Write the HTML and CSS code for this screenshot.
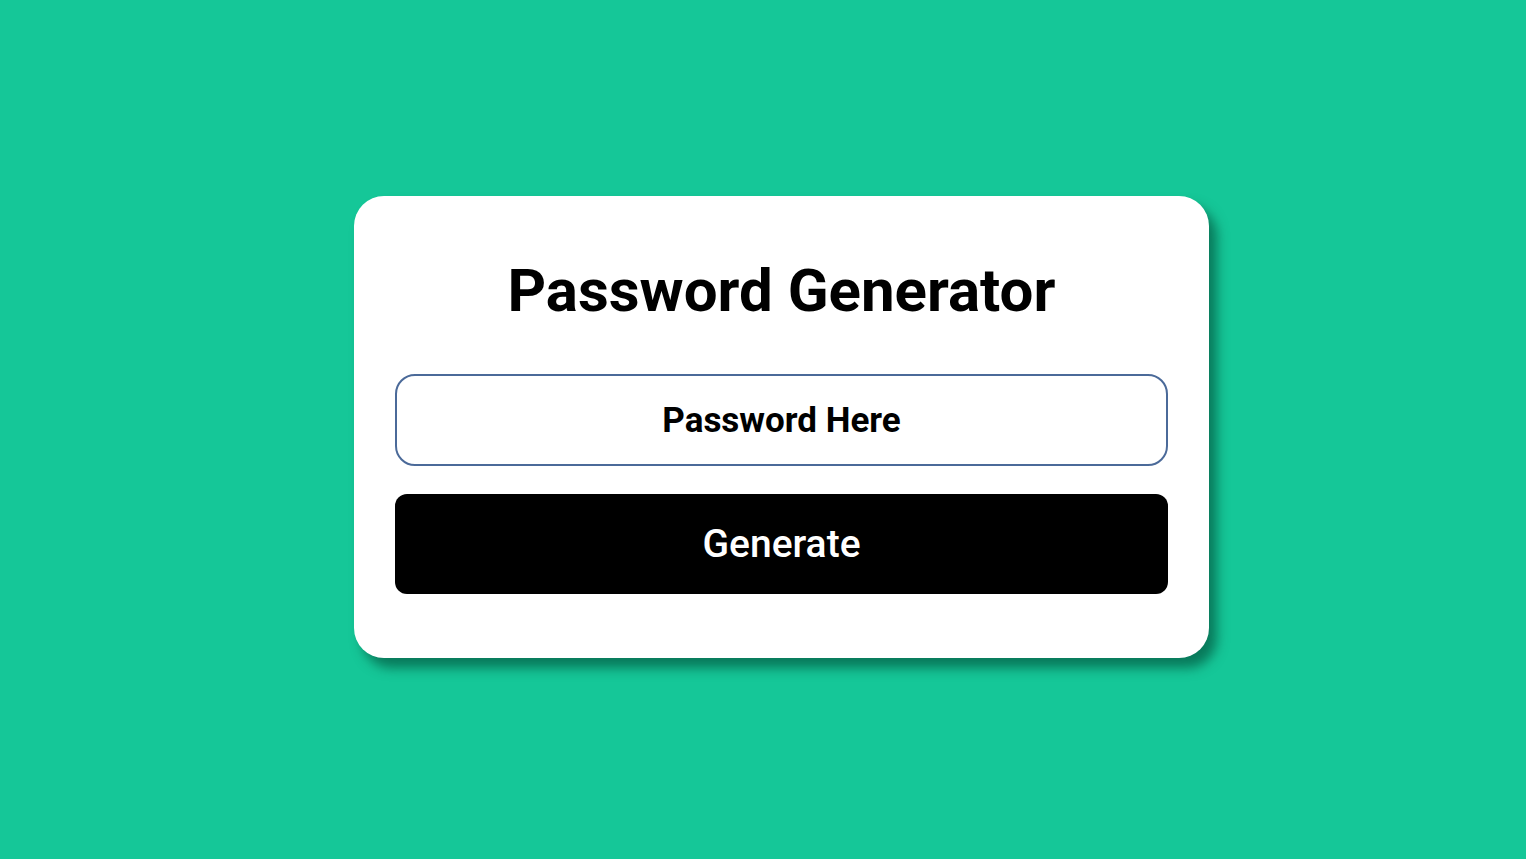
FILE: index.html
```html
<!DOCTYPE html>
<html>
<head>
<meta charset="utf-8">
<link rel="stylesheet" href="styles.css">
</head>
<body>
<div class="card">
  <h1 class="title">Password Generator</h1>
  <input class="field" type="text" placeholder="Password Here">
  <button class="btn">Generate</button>
</div>
</body>
</html>
```
FILE: styles.css
```css
html, body {
  margin: 0;
  height: 100%;
}
body {
  background: #15c798;
  font-family: Roboto, "Liberation Sans", sans-serif;
  display: flex;
  justify-content: center;
  align-items: flex-start;
}
.card {
  margin-top: 196px;
  margin-left: 37px;
  width: 855px;
  box-sizing: border-box;
  background: #fff;
  border-radius: 30px;
  padding: 52px 41px 64px;
  display: flex;
  flex-direction: column;
  box-shadow: 8px 10px 12px rgba(0, 70, 50, 0.6);
}
.title {
  margin: 0 0 40px;
  text-align: center;
  font-size: 60px;
  font-weight: 700;
  line-height: 86px;
  color: #000;
}
.field {
  height: 92px;
  box-sizing: border-box;
  border: 2px solid #4b6a99;
  border-radius: 20px;
  font-family: Roboto, "Liberation Sans", sans-serif;
  font-size: 35px;
  font-weight: 700;
  text-align: center;
  outline: none;
  margin: 0 0 28px;
}
.field::placeholder {
  color: #000;
  opacity: 1;
}
.btn {
  height: 100px;
  border: none;
  border-radius: 12px;
  background: #000;
  color: #fff;
  font-family: Roboto, "Liberation Sans", sans-serif;
  font-size: 39px;
  font-weight: 500;
  cursor: pointer;
}
```
